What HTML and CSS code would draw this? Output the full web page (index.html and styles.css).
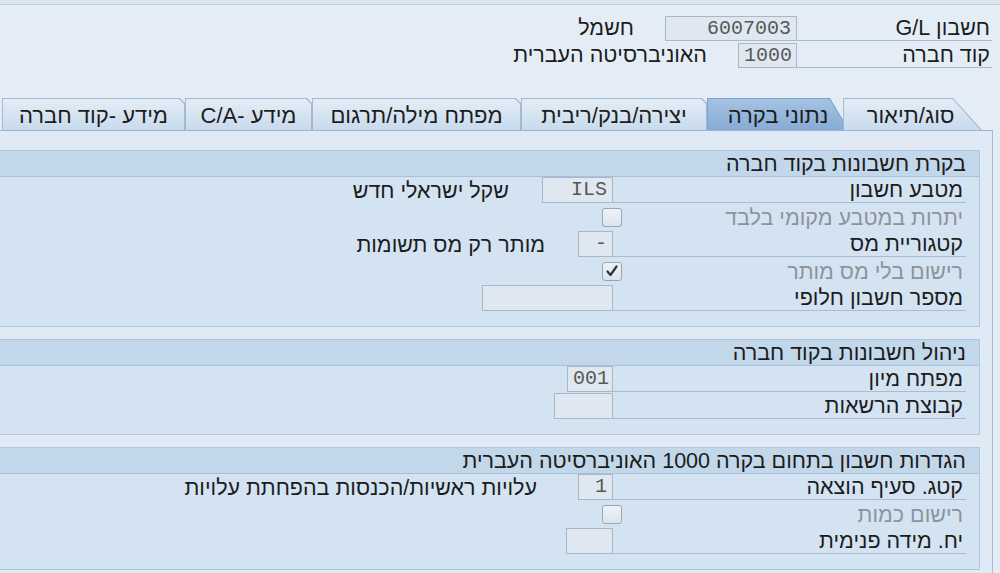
FILE: index.html
```html
<!DOCTYPE html>
<html lang="he" dir="rtl">
<head>
  <meta charset="UTF-8" />
  <meta name="viewport" content="width=device-width, initial-scale=1.0" />
  <title>חשבון G/L</title>
  <link rel="stylesheet" href="styles.css">
</head>
<body>

  <!-- Thin strip at the very top -->
  <div class="top-strip"></div>

  <!-- Header fields: account and company code -->
  <div class="head">
    <div class="head-row">
      <span class="head-label">חשבון G/L</span>
      <span class="field w-132">6007003</span>
      <span class="head-text">חשמל</span>
    </div>
    <div class="head-row">
      <span class="head-label">קוד חברה</span>
      <span class="field w-59">1000</span>
      <span class="head-text">האוניברסיטה העברית</span>
    </div>
  </div>

  <!-- Tab strip -->
  <div class="tabs">
    <div class="tab tab-first"><div class="tab-face">סוג/תיאור</div></div>
    <div class="tab tab-active"><div class="tab-face">נתוני בקרה</div></div>
    <div class="tab w-186"><div class="tab-face">יצירה/בנק/ריבית</div></div>
    <div class="tab w-209"><div class="tab-face">מפתח מילה/תרגום</div></div>
    <div class="tab w-127"><div class="tab-face">מידע -C/A</div></div>
    <div class="tab w-183"><div class="tab-face">מידע -קוד חברה</div></div>
  </div>

  <!-- Tab content -->
  <div class="panel">

    <!-- Account control -->
    <div class="group">
      <div class="group-title">בקרת חשבונות בקוד חברה</div>
      <div class="group-body">
        <div class="row">
          <span class="lbl">מטבע חשבון</span>
          <span class="field w-71">ILS</span>
          <span class="desc">שקל ישראלי חדש</span>
        </div>
        <div class="row">
          <span class="lbl lbl-check">יתרות במטבע מקומי בלבד</span>
          <span class="check"></span>
        </div>
        <div class="row">
          <span class="lbl">קטגוריית מס</span>
          <span class="field w-35">-</span>
          <span class="desc">מותר רק מס תשומות</span>
        </div>
        <div class="row">
          <span class="lbl lbl-check">רישום בלי מס מותר</span>
          <span class="check">
            <svg width="18" height="17" viewBox="0 0 18 17"><path d="M4.5 8.5 L7.5 12 L13.5 3.5" fill="none" stroke="#333" stroke-width="2.2" stroke-linecap="round" stroke-linejoin="round"/></svg>
          </span>
        </div>
        <div class="row">
          <span class="lbl">מספר חשבון חלופי</span>
          <span class="field w-131"></span>
        </div>
      </div>
    </div>

    <!-- Account management -->
    <div class="group">
      <div class="group-title">ניהול חשבונות בקוד חברה</div>
      <div class="group-body">
        <div class="row">
          <span class="lbl">מפתח מיון</span>
          <span class="field w-46">001</span>
        </div>
        <div class="row">
          <span class="lbl">קבוצת הרשאות</span>
          <span class="field w-59"></span>
        </div>
      </div>
    </div>

    <!-- Controlling area settings -->
    <div class="group">
      <div class="group-title">הגדרות חשבון בתחום בקרה 1000 האוניברסיטה העברית</div>
      <div class="group-body">
        <div class="row">
          <span class="lbl">קטג. סעיף הוצאה</span>
          <span class="field w-35">1</span>
          <span class="desc desc-wide">עלויות ראשיות/הכנסות בהפחתת עלויות</span>
        </div>
        <div class="row">
          <span class="lbl lbl-check">רישום כמות</span>
          <span class="check"></span>
        </div>
        <div class="row">
          <span class="lbl">יח. מידה פנימית</span>
          <span class="field w-47"></span>
        </div>
      </div>
    </div>

  </div>
</body>
</html>
```

FILE: styles.css
```css
/* Page base */
body {
  margin: 0;
  height: 573px;
  overflow: hidden;
  font-family: "Liberation Sans", "DejaVu Sans", Arial, sans-serif;
  font-size: 21.5px;
  color: #1c1c1c;
  background-color: #e4edf6;
}

/* Thin strip at the very top */
.top-strip {
  height: 4px;
  background-color: #dbe5ef;
  border-bottom: 1px solid #bfcddc;
}

/* Header fields */
.head {
  height: 93px;
  box-sizing: border-box;
  padding: 11px 8px 0 0;
}

.head-row {
  display: flex;
  height: 25px;
  margin-bottom: 2px;
}

.head-label {
  width: 195px;
  box-sizing: border-box;
  padding-right: 2px;
  border-bottom: 1px solid #a9bbcf;
  display: flex;
  align-items: center;
}

.head-text {
  margin-right: 31px;
  align-self: center;
}

/* Read-only input box */
.field {
  display: block;
  box-sizing: border-box;
  height: 25px;
  padding: 0 5px;
  border: 1px solid #aab7c6;
  background-color: #dfe8f1;
  font-family: "Liberation Mono", "DejaVu Sans Mono", monospace;
  font-size: 20px;
  line-height: 23px;
  color: #585858;
  direction: ltr;
  text-align: right;
}

.w-35 { width: 35px; }
.w-46 { width: 46px; }
.w-47 { width: 47px; }
.w-59 { width: 59px; }
.w-71 { width: 71px; }
.w-131 { width: 131px; }
.w-132 { width: 132px; }

/* Tab strip */
.tabs {
  display: flex;
  height: 32px;
  padding-right: 18px;
}

.tab {
  position: relative;
  height: 32px;
  background-color: #a2b9d3;
  clip-path: polygon(0 0, calc(100% - 5px) 0, 100% 5px, 100% 100%, 0 100%);
}

.tab-face {
  height: 31px;
  margin: 1px 1px 0 1px;
  padding-top: 2px;
  box-sizing: border-box;
  background: linear-gradient(#e4edf6, #c8daec);
  clip-path: polygon(0 0, calc(100% - 5px) 0, 100% 5px, 100% 100%, 0 100%);
  display: flex;
  align-items: center;
  justify-content: center;
  font-size: 22px;
  white-space: nowrap;
}

.tab-first {
  width: 139px;
  z-index: 2;
  clip-path: polygon(0 0, 110px 0, 100% 100%, 0 100%);
}

.tab-first .tab-face {
  padding-right: 4px;
  clip-path: polygon(0 0, 108.5px 0, calc(100% - 0.5px) 100%, 0 100%);
}

.tab-active {
  width: 142px;
  margin-right: -6px;
  background-color: #7fa2cb;
  clip-path: polygon(0 0, 123px 0, 100% 100%, 0 100%);
}

.tab-active .tab-face {
  background: linear-gradient(#a4c2e3, #88acd5);
  clip-path: polygon(0 0, 121.5px 0, calc(100% - 0.5px) 100%, 0 100%);
}

.w-127 { width: 127px; }
.w-183 { width: 183px; }
.w-186 { width: 186px; }
.w-209 { width: 209px; }

/* Tab content panel */
.panel {
  height: 443px;
  box-sizing: border-box;
  margin-right: 7px;
  padding: 19px 12px 0 0;
  background-color: #e0eaf4;
  border-top: 1px solid #9cb4cf;
  border-right: 1px solid #a8bdd4;
}

/* Group box */
.group {
  margin-bottom: 12px;
  background-color: #d3e3f2;
  border: 1px solid #b0c6dc;
  border-left: none;
}

.group-title {
  height: 25px;
  padding-right: 13px;
  line-height: 27px;
  background-color: #c3d7ea;
  border-bottom: 1px solid #a8c0d8;
  white-space: nowrap;
}

.group-body {
  padding: 0 13px 14px 0;
}

/* Form row */
.row {
  display: flex;
  align-items: center;
  height: 26px;
  margin-bottom: 1px;
}

.row .field {
  height: 26px;
  line-height: 24px;
}

.lbl {
  width: 353px;
  height: 100%;
  box-sizing: border-box;
  padding: 2px 3px 0 0;
  border-bottom: 1px solid #a9bdd2;
  display: flex;
  align-items: center;
  white-space: nowrap;
}

/* Disabled label next to a checkbox */
.lbl-check {
  width: 344px;
  border-bottom: none;
  color: #8d939a;
}

.check {
  width: 20px;
  height: 19px;
  box-sizing: border-box;
  border: 1px solid #98a6b5;
  border-radius: 3px;
  background: linear-gradient(#eef3f8, #dbe4ed);
  display: flex;
  align-items: center;
  justify-content: center;
}

.desc {
  margin-right: 33px;
  padding-top: 2px;
  white-space: nowrap;
}

.desc-wide {
  margin-right: 41px;
}
```
